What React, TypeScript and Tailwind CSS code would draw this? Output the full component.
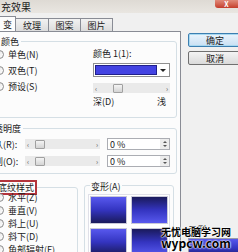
import React from 'react'

const Radio = ({ label }: { label: string }) => (
  <div className="flex h-[13px] items-center gap-[4px]">
    <span className="h-[9px] w-[9px] shrink-0 rounded-full border border-[#8a8a8a] bg-gradient-to-br from-[#e4e4e4] to-[#ffffff]" />
    <span>{label}</span>
  </div>
)

const ScrollSlider = ({ thumbAt }: { thumbAt: number }) => (
  <div className="flex h-[10px] w-full items-center justify-between bg-[#eaeaea] px-[2px] text-[7px] text-[#555]">
    <span>‹</span>
    <div className="flex flex-1 items-center">
      <span style={{ width: thumbAt }} />
      <span className="h-[9px] w-[10px] rounded-[1px] border border-[#a0a0a0] bg-gradient-to-b from-[#f4f4f4] to-[#d4d4d4]" />
    </div>
    <span>›</span>
  </div>
)

const Spinner = () => (
  <div className="flex h-[12px] w-[63px] items-center justify-between border border-[#abadb3] bg-white pl-[2px]">
    <span>0 %</span>
    <div className="flex h-full w-[9px] flex-col items-center justify-center gap-[2px] bg-[#ececec]">
      <span className="h-0 w-0 border-x-[2px] border-b-[2px] border-x-transparent border-b-[#555]" />
      <span className="h-0 w-0 border-x-[2px] border-t-[2px] border-x-transparent border-t-[#555]" />
    </div>
  </div>
)

const Swatch = ({ dir }: { dir: 'down' | 'up' }) => (
  <div
    className={`h-[28px] w-[37px] border border-[#c8c8d8] ${
      dir === 'down'
        ? 'bg-gradient-to-b from-[#5858ee] via-[#3434c0] to-[#1a1a5c]'
        : 'bg-gradient-to-b from-[#1a1a5c] via-[#3434c0] to-[#5858ee]'
    }`}
  />
)

export default function App() {
  return (
    <div className="relative flex h-[252px] w-[238px] flex-col overflow-hidden bg-[#f0f0f0] font-['SimSun','Noto_Sans_CJK_SC',sans-serif] text-[9px] leading-[9px] text-[#1a1a1a]">
      {/* 标题栏 */}
      <div className="flex h-[13px] shrink-0 items-start justify-between bg-gradient-to-b from-[#dedad4] to-[#e9e6e1]">
        <span className="pl-[1px] pt-[2px] text-[10px] leading-[10px]">充效果</span>
        <div className="flex h-[8px] w-[23px] items-center justify-center rounded-bl-[3px] bg-gradient-to-b from-[#e08a7a] to-[#c43b2a] text-[7px] font-bold text-white">
          X
        </div>
      </div>

      <div className="flex flex-1">
        {/* 左侧：选项卡 + 面板 */}
        <div className="flex w-[181px] shrink-0 flex-col pt-[4px]">
          <div className="flex h-[14px] items-end">
            <div className="-mb-px flex h-[16px] w-[16px] items-center justify-center border-r border-t border-[#898c95] bg-[#fcfcfc]">
              变
            </div>
            <div className="flex h-[13px] w-[33px] items-center justify-center border-r border-t border-[#898c95] bg-gradient-to-b from-[#f2f2f2] to-[#dcdcdc]">
              纹理
            </div>
            <div className="flex h-[13px] w-[32px] items-center justify-center border-r border-t border-[#898c95] bg-gradient-to-b from-[#f2f2f2] to-[#dcdcdc]">
              图案
            </div>
            <div className="flex h-[13px] w-[32px] items-center justify-center border-r border-t border-[#898c95] bg-gradient-to-b from-[#f2f2f2] to-[#dcdcdc]">
              图片
            </div>
          </div>

          <div className="flex flex-1 flex-col border-r border-t border-[#898c95] bg-[#fcfcfc]">
            {/* 颜色 */}
            <fieldset className="-ml-[8px] mt-[5px] w-[185px] rounded-[3px] border border-[#d5dfe5] pb-[11px] pl-[2px]">
              <legend className="ml-[4px] px-[2px]">颜色</legend>
              <div className="flex">
                <div className="flex w-[98px] flex-col gap-[3px] pt-[2px]">
                  <Radio label="单色(N)" />
                  <Radio label="双色(T)" />
                  <Radio label="预设(S)" />
                </div>
                <div className="flex w-[77px] flex-col pt-[3px]">
                  <span>颜色 1(1):</span>
                  <div className="mt-[5px] flex h-[14px] items-center border border-[#8f8f8f] bg-white p-[1px]">
                    <div className="h-full flex-1 border border-[#20208a] bg-[#4343e2]" />
                    <div className="flex h-full w-[11px] items-center justify-center">
                      <span className="h-0 w-0 border-x-[3px] border-t-[3px] border-x-transparent border-t-[#222]" />
                    </div>
                  </div>
                  <div className="mt-[6px]">
                    <ScrollSlider thumbAt={16} />
                  </div>
                  <div className="mt-[4px] flex justify-between pr-[4px]">
                    <span>深(D)</span>
                    <span>浅</span>
                  </div>
                </div>
              </div>
            </fieldset>

            {/* 透明度 */}
            <fieldset className="-ml-[8px] mt-[6px] w-[185px] rounded-[3px] border border-[#d5dfe5] pb-[6px] pl-[2px]">
              <legend className="-ml-[3px] px-[2px]">透明度</legend>
              <div className="flex flex-col gap-[5px] pt-[5px]">
                <div className="flex h-[12px] items-center">
                  <span className="-ml-[1px] w-[31px]">从(R):</span>
                  <div className="w-[75px]">
                    <ScrollSlider thumbAt={6} />
                  </div>
                  <div className="ml-[7px]">
                    <Spinner />
                  </div>
                </div>
                <div className="flex h-[12px] items-center">
                  <span className="-ml-[1px] w-[31px]">到(O):</span>
                  <div className="w-[75px]">
                    <ScrollSlider thumbAt={6} />
                  </div>
                  <div className="ml-[7px]">
                    <Spinner />
                  </div>
                </div>
              </div>
            </fieldset>

            {/* 底纹样式 / 变形 */}
            <div className="mt-[6px] flex gap-[6px]">
              <fieldset className="-ml-[8px] w-[86px] rounded-[3px] border border-[#d5dfe5] pl-[2px]">
                <legend className="border-2 border-[#b3343c] px-[1px] py-[1px]">底纹样式</legend>
                <div className="-mt-[4px] flex flex-col">
                  <Radio label="水平(Z)" />
                  <Radio label="垂直(V)" />
                  <Radio label="斜上(U)" />
                  <Radio label="斜下(D)" />
                  <Radio label="角部辐射(F)" />
                </div>
              </fieldset>
              <fieldset className="w-[90px] rounded-[3px] border border-[#d5dfe5] pl-[3px] pt-[1px]">
                <legend className="ml-[2px] px-[1px] pt-[2px]">变形(A)</legend>
                <div className="mt-[2px] grid w-[82px] grid-cols-2 gap-[4px] border border-[#e0e0e8] bg-white p-[1px]">
                  <Swatch dir="down" />
                  <Swatch dir="up" />
                  <Swatch dir="down" />
                  <Swatch dir="up" />
                </div>
              </fieldset>
            </div>
          </div>
        </div>

        {/* 右侧按钮 */}
        <div className="flex flex-1 flex-col pl-[7px] pt-[20px]">
          <div className="flex h-[14px] w-[54px] items-center justify-center rounded-[2px] border border-[#3c7fb1] bg-gradient-to-b from-[#eaf4fc] to-[#c9e0f3] shadow-[inset_0_0_0_1px_#a8d8f0]">
            确定
          </div>
          <div className="mt-[4px] flex h-[14px] w-[54px] items-center justify-center rounded-[2px] border border-[#707070] bg-gradient-to-b from-[#f4f4f4] to-[#dadada]">
            取消
          </div>
          <div className="flex-1" />
          <span className="mb-[4px]">示例</span>
          <div className="h-[21px] w-[56px] border border-[#9a9aa8] bg-gradient-to-b from-[#5858ee] via-[#3434c0] to-[#1a1a5c]" />
        </div>
      </div>

      {/* 水印 */}
      <div className="absolute left-[161px] top-[227px] flex flex-col items-center font-['Noto_Sans_CJK_SC',sans-serif] font-bold text-black [text-shadow:0_0_2px_#fff,0_0_2px_#fff,0_0_1px_#fff]">
        <span className="text-[10px] leading-[10px]">无忧电脑学习网</span>
        <span className="text-[12px] leading-[11px]">wypcw.com</span>
      </div>
    </div>
  )
}
